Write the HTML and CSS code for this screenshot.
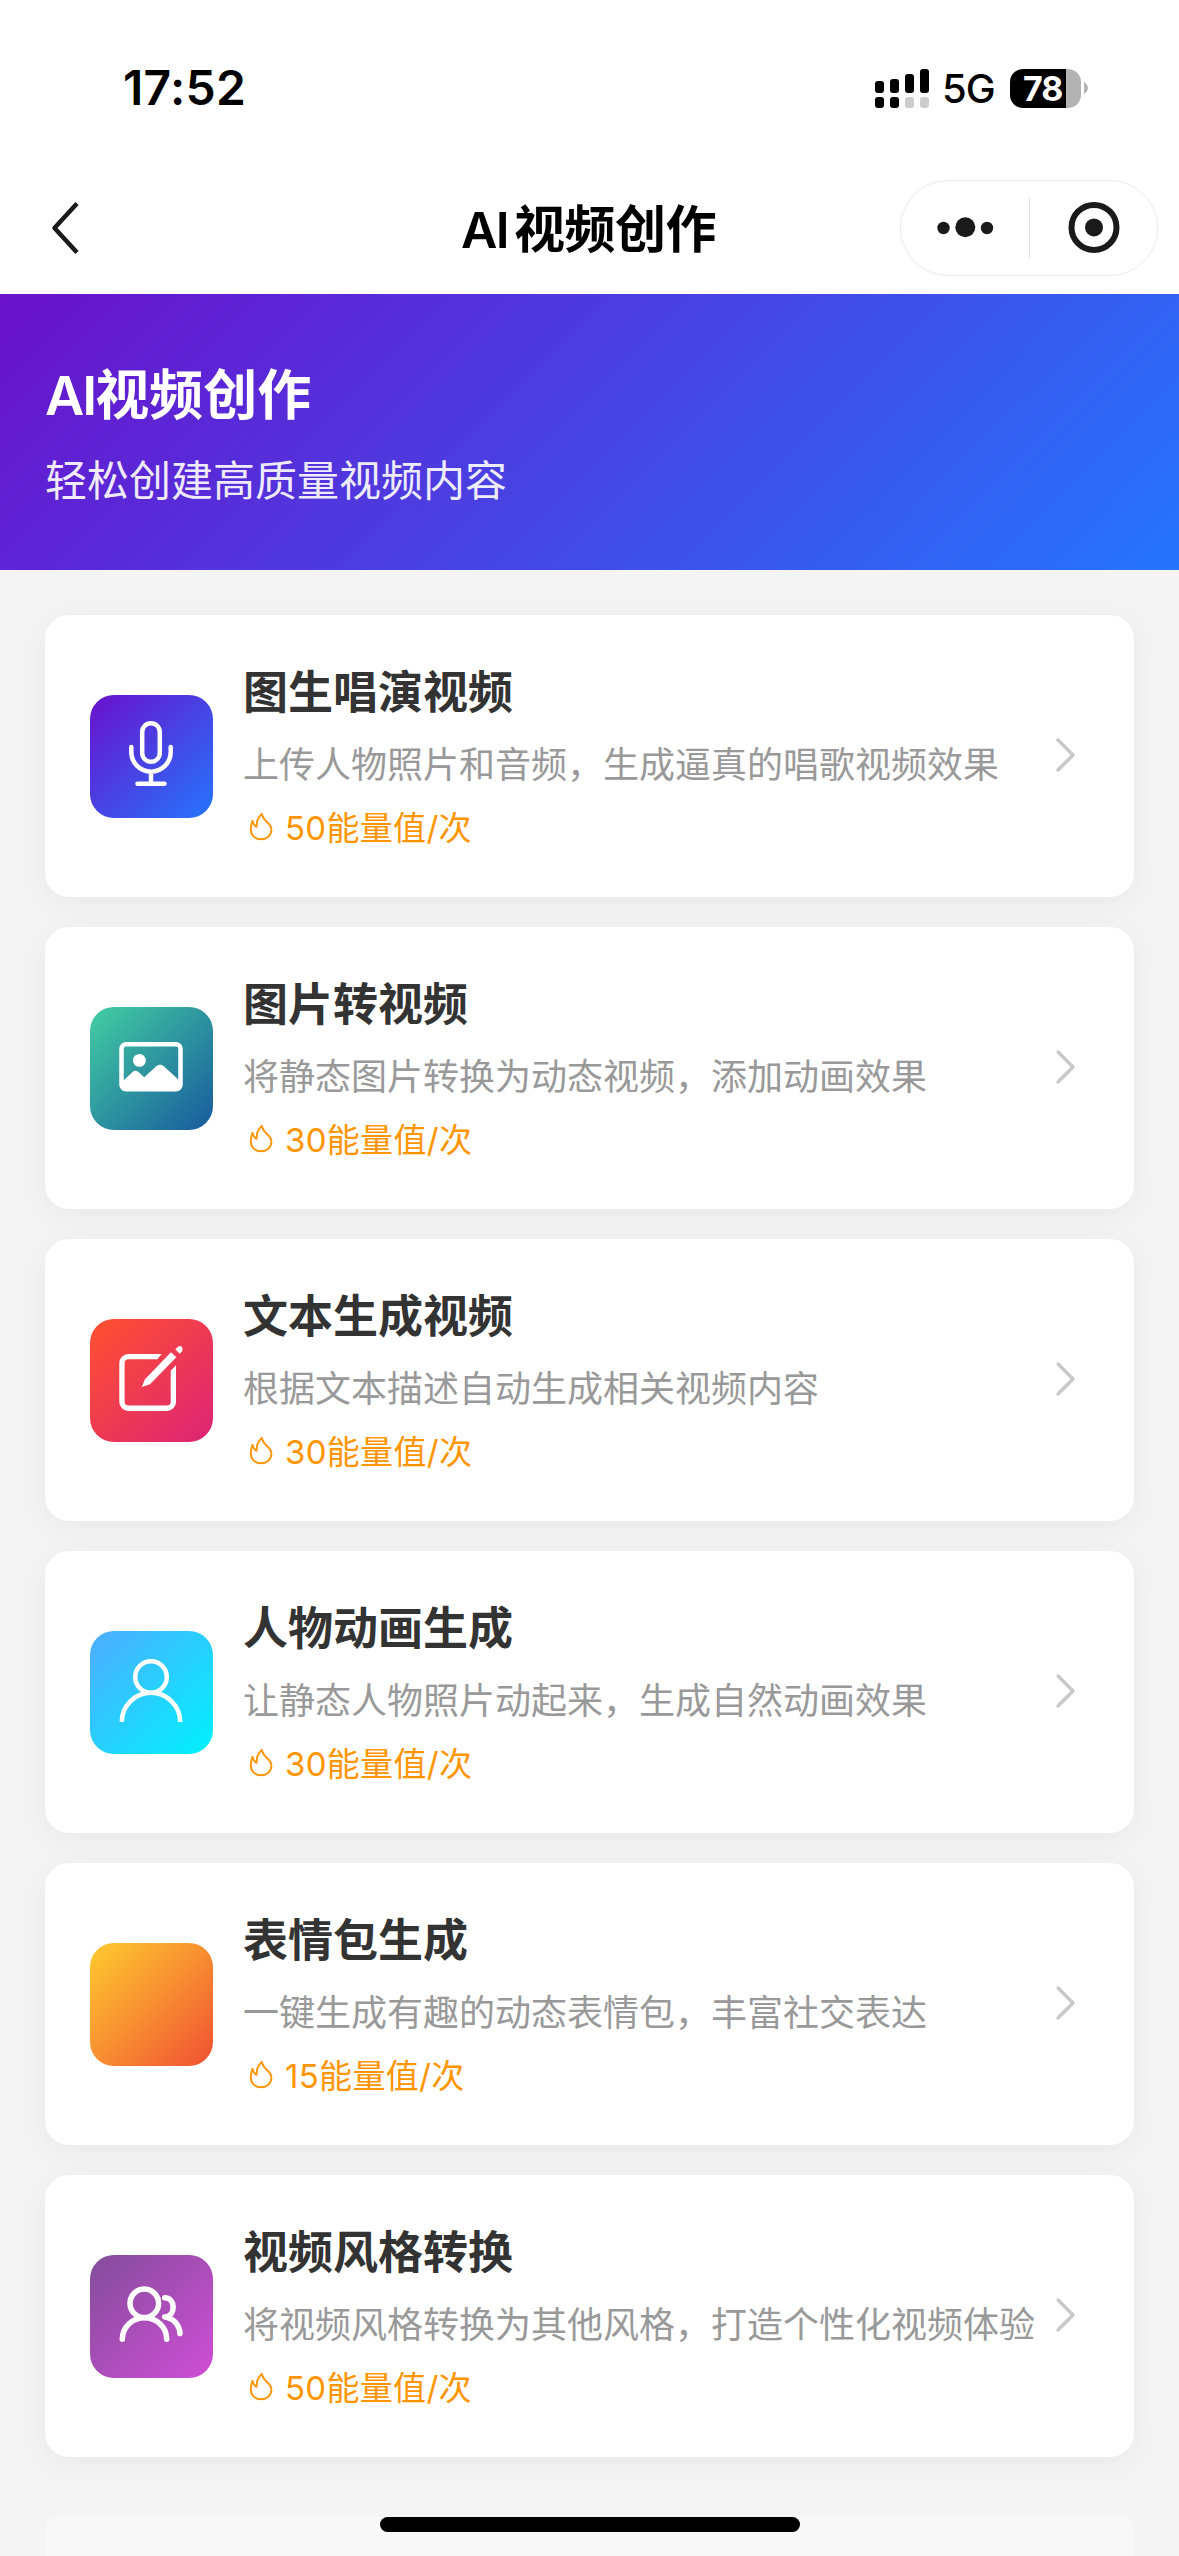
FILE: index.html
```html
<!DOCTYPE html>
<html lang="zh-CN">
<head>
<meta charset="utf-8">
<title>AI视频创作</title>
<link rel="stylesheet" href="styles.css">
</head>
<body>
<svg class="defs" width="0" height="0">
  <symbol id="flame" viewBox="0 0 36 36"><path d="M18.800 4C15 7.500 13.200 11 13.800 16.800C11.200 16.300 10.300 14 9.400 10.800C8.200 14 7.800 16.500 7.800 19.500C7.800 25.500 12.300 29.300 18 29.300C24 29.300 28.400 25.500 28.400 19.500C28.400 13 20.500 12 18.800 4Z" fill="none" stroke="currentColor" stroke-width="1.900" stroke-linejoin="round"/></symbol>
  <symbol id="arrow" viewBox="0 0 24 40"><path d="M4 5L19 20L4 35" fill="none" stroke="currentColor" stroke-width="3.400" stroke-linecap="round" stroke-linejoin="round"/></symbol>
</svg>
<div class="screen">
  <header class="top">
    <div class="status">
      <span class="time">17:52</span>
      <div class="status-right">
        <svg class="signal" width="54" height="39" viewBox="0 0 54 39">
          <rect x="0" y="12" width="9" height="12" rx="3"/><rect x="15" y="10" width="9" height="14" rx="3"/><rect x="30" y="5" width="9" height="19" rx="3"/><rect x="45" y="0" width="9" height="24" rx="3"/>
          <rect x="0" y="28" width="9" height="11" rx="3"/><rect x="15" y="28" width="9" height="11" rx="3"/><rect class="off" x="30" y="28" width="9" height="11" rx="3"/><rect class="off" x="45" y="28" width="9" height="11" rx="3"/>
        </svg>
        <span class="network">5G</span>
        <span class="battery">78</span>
        <svg class="nub" width="4" height="12" viewBox="0 0 4 12"><path d="M0 0Q4 3 4 6Q4 9 0 12Z"/></svg>
      </div>
    </div>
    <div class="nav">
      <svg class="back" width="30" height="54" viewBox="0 0 30 54"><path d="M27 2.500L4.500 27L27 51.500"/></svg>
      <h1 class="nav-title"><span class="nav-latin">AI</span><span class="nav-cjk">视频创作</span></h1>
      <div class="capsule">
        <svg width="258" height="96" viewBox="0 0 258 96"><circle cx="43.500" cy="48" r="6.200"/><circle cx="65.300" cy="47.300" r="10"/><circle cx="87" cy="48" r="6.200"/><path class="divider" d="M129.500 18V78"/><circle class="ring" cx="194" cy="47.400" r="22.500"/><circle cx="194" cy="47.400" r="9"/></svg>
      </div>
    </div>
  </header>
  <section class="banner">
    <h2 class="banner-title"><span class="banner-latin">AI</span>视频创作</h2>
    <p class="banner-sub">轻松创建高质量视频内容</p>
  </section>
  <main class="list">
    <article class="card">
      <div class="icon sing"><svg viewBox="0 0 123 123"><g class="line w45"><rect x="52.200" y="28.200" width="17.600" height="38.600" rx="8.800"/><path d="M41.300 52V57a19.700 19.700 0 0 0 39.400 0V52M61 77V88M47.500 88.700H74.500"/></g></svg></div>
      <div class="body"><h3>图生唱演视频</h3><p class="desc">上传人物照片和音频，生成逼真的唱歌视频效果</p><p class="cost"><svg class="flame"><use href="#flame"/></svg>50能量值/次</p></div>
      <svg class="arrow"><use href="#arrow"/></svg>
    </article>
    <article class="card">
      <div class="icon image"><svg viewBox="0 0 123 123"><rect class="line w45" x="31.500" y="37.200" width="59" height="45" rx="4.500"/><circle class="solid" cx="49.400" cy="53.400" r="6.400"/><path class="solid" d="M33 74L42.500 65Q45.500 62.500 48.500 65L54.300 70.300L66.500 59Q70 56.500 73.500 59L90 74V82H33Z"/></svg></div>
      <div class="body"><h3>图片转视频</h3><p class="desc">将静态图片转换为动态视频，添加动画效果</p><p class="cost"><svg class="flame"><use href="#flame"/></svg>30能量值/次</p></div>
      <svg class="arrow"><use href="#arrow"/></svg>
    </article>
    <article class="card">
      <div class="icon text"><svg viewBox="0 0 123 123"><g class="solid"><path d="M71.700 35L67.300 40.300H38.600a4 4 0 0 0-4 4V82.500a4 4 0 0 0 4 4H76.700a4 4 0 0 0 4-4V51.700L86 46.200V83a9 9 0 0 1-9 9H38.300a9 9 0 0 1-9-9V44a9 9 0 0 1 9-9Z"/><path d="M51.700 68L55 60.300L81 33.300L86.300 38.300L60 65.200Z"/><path d="M85.300 30.300L87.700 28Q90.500 26 92 28Q93.500 30.500 92 32.300L89.700 34.700Z"/></g></svg></div>
      <div class="body"><h3>文本生成视频</h3><p class="desc">根据文本描述自动生成相关视频内容</p><p class="cost"><svg class="flame"><use href="#flame"/></svg>30能量值/次</p></div>
      <svg class="arrow"><use href="#arrow"/></svg>
    </article>
    <article class="card">
      <div class="icon person"><svg viewBox="0 0 123 123"><g class="line w45 butt"><circle cx="61" cy="46" r="15.800"/><path d="M31.800 91a29.200 29.200 0 0 1 58.400 0"/></g></svg></div>
      <div class="body"><h3>人物动画生成</h3><p class="desc">让静态人物照片动起来，生成自然动画效果</p><p class="cost"><svg class="flame"><use href="#flame"/></svg>30能量值/次</p></div>
      <svg class="arrow"><use href="#arrow"/></svg>
    </article>
    <article class="card">
      <div class="icon sticker"></div>
      <div class="body"><h3>表情包生成</h3><p class="desc">一键生成有趣的动态表情包，丰富社交表达</p><p class="cost"><svg class="flame"><use href="#flame"/></svg>15能量值/次</p></div>
      <svg class="arrow"><use href="#arrow"/></svg>
    </article>
    <article class="card">
      <div class="icon style"><svg viewBox="0 0 123 123"><g class="line w55"><circle cx="54.300" cy="48.300" r="14.300"/><path d="M32.300 84.300a22.200 21.500 0 0 1 44.400 0"/><path d="M74.700 42.700C86 43 86 61.500 74.700 62C83 63 89.500 69.500 90 78.500"/></g></svg></div>
      <div class="body"><h3>视频风格转换</h3><p class="desc">将视频风格转换为其他风格，打造个性化视频体验</p><p class="cost"><svg class="flame"><use href="#flame"/></svg>50能量值/次</p></div>
      <svg class="arrow"><use href="#arrow"/></svg>
    </article>
    <div class="more"></div>
  </main>
  <div class="home-bar"></div>
</div>
</body>
</html>
```
FILE: styles.css
```css
* { box-sizing: border-box; margin: 0; padding: 0; }
body { background: #f4f4f4; font-family: Inter, "Noto Sans CJK SC", sans-serif; }
.defs { position: absolute; }
.screen { position: relative; width: 1179px; height: 2556px; overflow: hidden; background: #f4f4f4; }
.top { height: 294px; background: #fff; }
.status { height: 176px; padding: 0 91px 0 123px; display: flex; align-items: center; justify-content: space-between; }
.time { font-size: 48px; font-weight: 600; line-height: 60px; letter-spacing: 0.3px; }
.status-right { display: flex; align-items: center; }
.signal .off { fill: #ccc; }
.network { margin-left: 13px; width: 68px; padding-top: 2px; font-size: 40px; font-weight: 500; line-height: 48px; letter-spacing: -1px; }
.battery { width: 71px; height: 39px; border-radius: 13px; background: linear-gradient(90deg, #000 56px, #b3b3b3 56px); color: #fff; font-size: 34px; font-weight: 700; line-height: 39px; padding-left: 13px; letter-spacing: -1px; }
.nub { margin-left: 3px; fill: #b3b3b3; }
.nav { height: 104px; padding: 0 21px 0 50px; display: grid; grid-template-columns: 229px 1fr 258px; align-items: center; }
.back path { fill: none; stroke: #1a1a1a; stroke-width: 4.500; stroke-linejoin: round; }
.nav-title { display: flex; justify-content: center; padding: 4px 2px 0 0; font-size: 51px; font-weight: 600; line-height: 72px; }
.nav-latin { font-size: 50px; letter-spacing: -1.500px; }
.nav-cjk { margin-left: 6px; letter-spacing: -0.5px; }
.capsule { height: 96px; border: 1px solid #ececec; border-radius: 48px; }
.capsule svg { display: block; margin: -1px; fill: #1a1a1a; }
.capsule .divider { stroke: #e2e2e2; stroke-width: 1; }
.capsule .ring { fill: none; stroke: #1a1a1a; stroke-width: 6; }
.banner { height: 276px; padding: 64px 45px 0; color: #fff; background: linear-gradient(135deg, #6a11cb 0%, #2575fc 100%); }
.banner-title { font-size: 54px; font-weight: 700; line-height: 76px; }
.banner-latin { font-weight: 600; letter-spacing: -2px; }
.banner-sub { margin-top: 17px; font-size: 42px; line-height: 60px; opacity: .9; }
.list { padding: 45px 45px 0; display: flex; flex-direction: column; gap: 30px; }
.card { height: 282px; padding: 0 56px 0 45px; display: flex; align-items: center; border-radius: 24px; background: #fff; box-shadow: 0 6px 30px rgba(0, 0, 0, .05); }
.icon { flex: none; width: 123px; height: 123px; border-radius: 24px; }
.icon svg { display: block; width: 123px; height: 123px; }
.line { fill: none; stroke: #fff; stroke-linecap: round; stroke-linejoin: round; }
.w45 { stroke-width: 4.500; }
.w55 { stroke-width: 5.500; }
.butt { stroke-linecap: butt; }
.solid { fill: #fff; }
.sing { background: linear-gradient(135deg, #6a11cb, #2575fc); }
.image { background: linear-gradient(135deg, #43cea2, #185a9d); }
.text { background: linear-gradient(135deg, #ff512f, #dd2476); }
.person { background: linear-gradient(135deg, #4facfe, #00f2fe); }
.sticker { background: linear-gradient(135deg, #ffcb2f, #f05033); }
.style { background: linear-gradient(135deg, #834d9b, #d04ed6); }
.body { flex: 1; margin-left: 30px; white-space: nowrap; }
.body h3 { padding-top: 1px; font-size: 45px; font-weight: 700; line-height: 63px; color: #333; }
.desc { margin-top: 16px; font-size: 36px; line-height: 50px; color: #999; }
.cost { margin-top: 15px; padding-bottom: 1px; display: flex; align-items: center; font-size: 33px; line-height: 46px; letter-spacing: 0.3px; color: #ff9500; }
.flame { width: 36px; height: 36px; margin-right: 6px; }
.arrow { flex: none; width: 24px; height: 40px; margin-bottom: 2px; color: #c8c8c8; }
.more { height: 80px; margin-top: 30px; border-radius: 12px; background: #f8f8f8; }
.home-bar { position: absolute; left: 380px; bottom: 24px; width: 420px; height: 15px; border-radius: 8px; background: #000; }
```
